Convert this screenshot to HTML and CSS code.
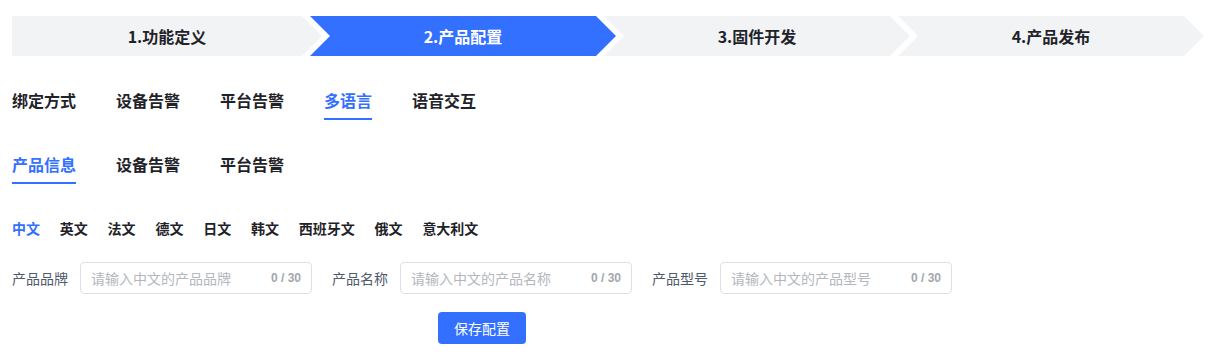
FILE: index.html
```html
<!DOCTYPE html>
<html lang="zh-CN">
<head>
<meta charset="utf-8">
<title>产品配置</title>
<link rel="stylesheet" href="styles.css">
</head>
<body>
<div class="page">
  <div class="steps">
    <div class="step step-first">1.功能定义</div>
    <div class="step step-active">2.产品配置</div>
    <div class="step">3.固件开发</div>
    <div class="step step-last">4.产品发布</div>
  </div>

  <div class="tabs tabs-main">
    <div class="tab">绑定方式</div>
    <div class="tab">设备告警</div>
    <div class="tab">平台告警</div>
    <div class="tab tab-active">多语言</div>
    <div class="tab">语音交互</div>
  </div>

  <div class="tabs tabs-sub">
    <div class="tab tab-active">产品信息</div>
    <div class="tab">设备告警</div>
    <div class="tab">平台告警</div>
  </div>

  <div class="langs">
    <span class="lang lang-active">中文</span>
    <span class="lang">英文</span>
    <span class="lang">法文</span>
    <span class="lang">德文</span>
    <span class="lang">日文</span>
    <span class="lang">韩文</span>
    <span class="lang">西班牙文</span>
    <span class="lang">俄文</span>
    <span class="lang">意大利文</span>
  </div>

  <div class="form">
    <div class="form-row">
      <div class="field">
        <label class="label">产品品牌</label>
        <div class="input">
          <span class="placeholder">请输入中文的产品品牌</span>
          <span class="count">0 / 30</span>
        </div>
      </div>
      <div class="field">
        <label class="label">产品名称</label>
        <div class="input">
          <span class="placeholder">请输入中文的产品名称</span>
          <span class="count">0 / 30</span>
        </div>
      </div>
      <div class="field">
        <label class="label">产品型号</label>
        <div class="input">
          <span class="placeholder">请输入中文的产品型号</span>
          <span class="count">0 / 30</span>
        </div>
      </div>
    </div>
    <div class="actions">
      <button class="btn">保存配置</button>
    </div>
  </div>
</div>
</body>
</html>
```

FILE: styles.css
```css
* {
  box-sizing: border-box;
}

html, body {
  margin: 0;
  padding: 0;
  background: #ffffff;
}

body {
  font-family: "Noto Sans CJK SC", "Liberation Sans", sans-serif;
  color: #1f2329;
}

.page {
  padding: 16px 12px 0 12px;
}

/* Steps */
.steps {
  display: flex;
}

.step {
  flex: none;
  width: 306px;
  height: 40px;
  line-height: 40px;
  margin-left: -12px;
  text-align: center;
  font-size: 16px;
  font-weight: 700;
  color: #1f2329;
  background: #f2f3f5;
  clip-path: polygon(0 0, calc(100% - 20px) 0, 100% 50%, calc(100% - 20px) 100%, 0 100%, 20px 50%);
}

.step-first {
  width: 310px;
  margin-left: 0;
  clip-path: polygon(0 0, calc(100% - 20px) 0, 100% 50%, calc(100% - 20px) 100%, 0 100%);
}

.step-active {
  background: #3370ff;
  color: #ffffff;
}

/* Tabs */
.tabs {
  display: flex;
  gap: 40px;
}

.tabs-main {
  margin-top: 32px;
}

.tabs-sub {
  margin-top: 32px;
}

.tab {
  font-size: 16px;
  line-height: 24px;
  font-weight: 700;
  color: #1f2329;
  padding-bottom: 6px;
  border-bottom: 2px solid transparent;
}

.tab-active {
  color: #3370ff;
  border-bottom-color: #3370ff;
}

/* Languages */
.langs {
  display: flex;
  gap: 19.8px;
  margin-top: 34px;
}

.lang {
  font-size: 14px;
  line-height: 20px;
  font-weight: 700;
  color: #1f2329;
}

.lang-active {
  color: #3370ff;
}

/* Form */
.form {
  display: inline-flex;
  flex-direction: column;
  margin-top: 24px;
}

.form-row {
  display: flex;
  gap: 20px;
}

.field {
  display: flex;
  align-items: center;
  gap: 12px;
}

.label {
  font-size: 14px;
  color: #4e5969;
  white-space: nowrap;
}

.input {
  width: 232px;
  height: 32px;
  border: 1px solid #dcdfe6;
  border-radius: 4px;
  display: flex;
  align-items: center;
  justify-content: space-between;
  padding: 0 10px;
}

.placeholder {
  font-size: 14px;
  color: #b4b7bd;
}

.count {
  font-family: "Liberation Sans", "Noto Sans CJK SC", sans-serif;
  font-size: 12px;
  font-weight: 700;
  color: #a2a6ad;
}

.actions {
  display: flex;
  justify-content: center;
  margin-top: 18px;
}

.btn {
  width: 88px;
  height: 32px;
  border: none;
  border-radius: 4px;
  background: #3370ff;
  color: #ffffff;
  font-family: "Noto Sans CJK SC", "Liberation Sans", sans-serif;
  font-size: 14px;
  padding: 0;
}
```
